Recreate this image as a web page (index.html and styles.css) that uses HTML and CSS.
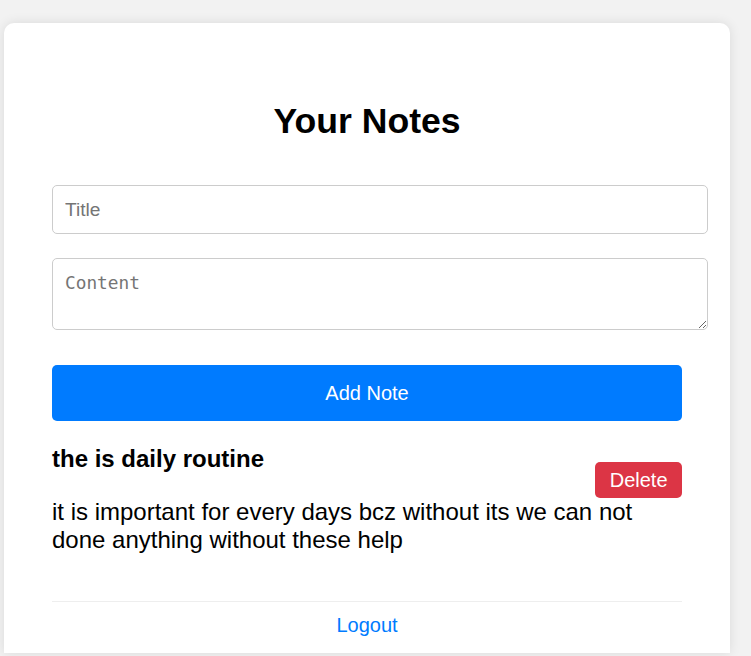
FILE: index.html
```html
<!DOCTYPE html>
<html lang="en">
<head>
<meta charset="utf-8">
<title>Your Notes</title>
<link rel="stylesheet" href="styles.css">
</head>
<body>
<div class="card">
  <h2 class="heading">Your Notes</h2>
  <input class="field" type="text" placeholder="Title">
  <textarea class="field area" placeholder="Content"></textarea>
  <button class="add-btn">Add Note</button>
  <div class="note">
    <h3 class="note-title">the is daily routine</h3>
    <button class="del-btn">Delete</button>
    <p class="note-body">it is important for every days bcz without its we can not done anything without these help</p>
  </div>
  <div class="footer">
    <a class="logout" href="#">Logout</a>
  </div>
</div>
</body>
</html>
```

FILE: styles.css
```css
html, body {
  margin: 0;
  padding: 0;
  height: 656px;
  overflow: hidden;
}
body {
  background: #f2f2f2;
  font-family: "Liberation Sans", Arial, sans-serif;
  color: #000;
}
.card {
  margin: 23px 0 0 4px;
  width: 630px;
  height: 582px;
  padding: 48px 48px 0 48px;
  background: #fff;
  border-radius: 10px 10px 0 0;
  box-shadow: 0 0 12px rgba(0, 0, 0, 0.1);
  display: flex;
  flex-direction: column;
}
.heading {
  margin: 30px 0 44px 0;
  font-size: 35.6px;
  line-height: 40px;
  font-weight: bold;
  text-align: center;
}
.field {
  display: block;
  width: 100%;
  margin: 0 0 24px 0;
  padding: 12px;
  border: 1px solid #ccc;
  border-radius: 5px;
  font-family: "Liberation Sans", Arial, sans-serif;
  font-size: 19.2px;
  line-height: 23px;
  color: #000;
  background: #fff;
  outline: none;
}
.field::placeholder {
  color: #757575;
}
.area {
  height: 46px;
  font-family: "DejaVu Sans Mono", "Liberation Mono", monospace;
  font-size: 17.8px;
  line-height: 23px;
  margin-bottom: 35px;
  resize: vertical;
}
.add-btn {
  display: block;
  width: 100%;
  height: 56px;
  border: none;
  border-radius: 5px;
  background: #007bff;
  color: #fff;
  font-family: "Liberation Sans", Arial, sans-serif;
  font-size: 20px;
  padding: 0;
  margin: 0 0 24px 0;
}
.note {
  display: flex;
  flex-direction: column;
}
.note-title {
  margin: 0;
  font-size: 24px;
  line-height: 28px;
  font-weight: bold;
}
.del-btn {
  align-self: flex-end;
  margin-top: -11px;
  height: 36px;
  padding: 0 14.5px;
  border: none;
  border-radius: 5px;
  background: #dc3545;
  color: #fff;
  font-family: "Liberation Sans", Arial, sans-serif;
  font-size: 20px;
}
.note-body {
  margin: 0;
  font-size: 24px;
  line-height: 27.6px;
}
.footer {
  margin-top: 48px;
  border-top: 1px solid #eee;
  padding-top: 12px;
  text-align: center;
}
.logout {
  color: #007bff;
  text-decoration: none;
  font-size: 20px;
  line-height: 23px;
}
```
